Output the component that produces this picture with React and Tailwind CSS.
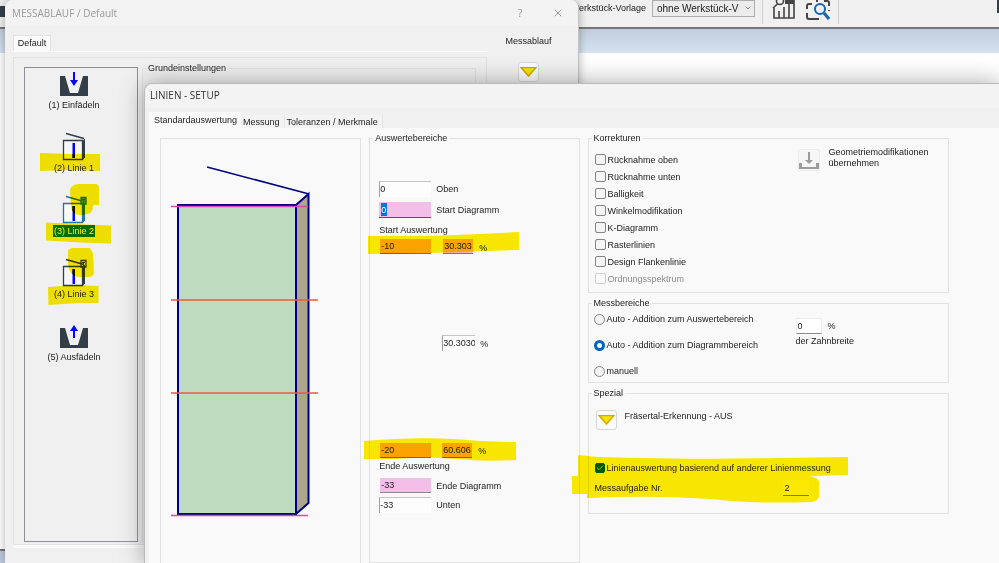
import { useState } from "react"
import { Check, ChevronDown, X } from "lucide-react"

const steps = [
  { id: 1, label: "(1) Einfädeln", icon: "in" },
  { id: 2, label: "(2) Linie 1", icon: "line" },
  { id: 3, label: "(3) Linie 2", icon: "calc" },
  { id: 4, label: "(4) Linie 3", icon: "calc" },
  { id: 5, label: "(5) Ausfädeln", icon: "out" },
]

const corrections = [
  { label: "Rücknahme oben" },
  { label: "Rücknahme unten" },
  { label: "Balligkeit" },
  { label: "Winkelmodifikation" },
  { label: "K-Diagramm" },
  { label: "Rasterlinien" },
  { label: "Design Flankenlinie" },
  { label: "Ordnungsspektrum", disabled: true },
]

const ranges = ["Auto - Addition zum Auswertebereich", "Auto - Addition zum Diagrammbereich", "manuell"]

const tabs = ["Standardauswertung", "Messung", "Toleranzen / Merkmale"]

const StepIcon = ({ type, active }) => {
  if (type === "in" || type === "out") {
    return (
      <svg width="40" height="28" viewBox="0 0 40 28">
        <path d="M6 5h5l5 17h8l5-17h5v20H6z" fill="#333f48" />
        {type === "in" ? (
          <path d="M19 1h2v8h3l-4 6-4-6h3z" fill="#0505f5" />
        ) : (
          <path d="M19 15h2V8h3l-4-6-4 6h3z" fill="#0505f5" />
        )}
      </svg>
    )
  }
  const color = active ? "#2472ad" : "#333f48"
  return (
    <svg width="40" height="28" viewBox="0 0 40 28" className="overflow-visible">
      <path d="M12 -0.500l18 5" stroke={color} strokeWidth="1.5" />
      <path d="M9.500 6.500h19v19h-19z" fill="#f8f8f8" stroke={color} strokeWidth="1.3" />
      <path d="M28.500 7l2.500-2.500v19l-2.500 2.500z" fill={color} />
      <path d="M18.500 9h2.500v15h-2.500z" fill="#0505f5" />
      <path d={type === "line" ? "M18.500 20h2.500v4h-2.500z" : "M18.500 9h2.500v5h-2.500z"} fill="#10104a" />
      {type === "calc" && (
        <g>
          <path d="M27 0.500h5v6.500h-5z" fill={active ? "#4b97a8" : "none"} stroke={color} strokeWidth="1.300" />
          <path d="M28 2.500h3M29.500 3v4" stroke={color} />
        </g>
      )}
    </svg>
  )
}

const ArrowButton = ({ label }) => (
  <button
    type="button"
    aria-label={label}
    className="flex h-5 w-[21px] items-center justify-center rounded-[3px] border border-[#d6d6d6] bg-[#fcfcfc]"
  >
    <svg width="17" height="10" viewBox="0 0 17 10">
      <path d="M1 0.500h15L8.500 9z" fill="#f8e400" stroke="#d3a800" strokeWidth="1.500" />
    </svg>
  </button>
)

const Group = ({ title, className = "", children }) => (
  <fieldset className="min-w-0 border border-[#e2e2e2]">
    <legend className="ml-[3px] px-0.5">{title}</legend>
    <div className={className}>{children}</div>
  </fieldset>
)

const ValueInput = ({ className = "", ...props }) => (
  <input
    type="text"
    className={`h-4 rounded-none border-l border-t border-[#c4c4c4] border-l-[#a0a0a0] bg-[#fdfdfd] pb-0.5 outline-none ${className}`}
    {...props}
  />
)

const ColorInput = ({ className = "", ...props }) => (
  <input type="text" className={`h-[15px] rounded-none border-b px-px outline-none ${className}`} {...props} />
)

const Toolbar = () => (
  <div>
    <div className="flex h-[29px] items-start border-b-2 border-[#77757a] bg-[#f0f0f0]">
      <div className="mt-1.5 h-[11px] w-1.5 shrink-0 bg-[#333f48]" />
      <label htmlFor="template" className="w-[640px] shrink-0 pt-0.5 text-right">
        Werkstück-Vorlage
      </label>
      <div className="relative ml-1.5 h-[17px] w-[103px] shrink-0">
        <select
          id="template"
          className="h-full w-full appearance-none border border-[#adadad] bg-[#ececec] pl-1 text-[10px] leading-3"
        >
          <option>ohne Werkstück-V</option>
        </select>
        <ChevronDown size={8} className="pointer-events-none absolute right-[3px] top-1 text-[#444]" />
      </div>
      <div className="ml-[7px] flex h-6 flex-1 items-start border-l border-[#cfcfcf] pl-[9px]">
        <button type="button" aria-label="Statistik" className="h-5 w-6">
          <svg width="24" height="20" viewBox="0 0 24 20" fill="none" stroke="#444" strokeWidth="1.600">
            <path d="M2 8v10h20V0M7 11v7M12 7v11M17 4v14" />
            <path d="M13 0h9v4h-9z" fill="#444" stroke="none" />
            <circle cx="8" cy="1" r="3.500" />
            <path d="M5.500 4L1 8" />
          </svg>
        </button>
        <button type="button" aria-label="Suche" className="ml-2.5 h-5 w-6">
          <svg width="24" height="20" viewBox="0 0 24 20" fill="none" stroke="#444" strokeWidth="2">
            <path d="M6 4H3q-2 0-2 2v3M1 13v4q0 2 2 2h8M11 19h2M18 1h3q2 0 2 2v3M23 10v1M10 1h2" />
            <circle cx="14" cy="9" r="5" stroke="#1763ad" />
            <path d="M18 13l5 6" stroke="#1763ad" strokeWidth="3" />
          </svg>
        </button>
        <div className="ml-2 h-6 w-px bg-[#cfcfcf]" />
        <div className="ml-auto h-[13px] w-0.5 bg-[#333f48]" />
      </div>
    </div>
    <div className="h-6 bg-linear-to-b from-[#c1cddc] to-[#d5e3f1]" />
  </div>
)

const SequenceWindow = () => {
  const [active, setActive] = useState(3)

  return (
    <section className="absolute bottom-0 left-[5px] top-0 flex w-[574px] flex-col rounded-t-lg border-r border-[#c4c4c4] bg-[#f0f0f0] shadow-[0_0_10px_rgba(0,0,0,0.3)]">
      <header className="flex h-[26px] shrink-0 items-center rounded-t-lg bg-[#f3f3f3] pl-[7px] pr-3 text-[#999]">
        <h1 className="flex-1 font-['Open_Sans','Noto_Sans',sans-serif] text-[10px]">MESSABLAUF / Default</h1>
        <button type="button" aria-label="Hilfe" className="w-4 font-['Open_Sans',sans-serif] text-[11px]">
          ?
        </button>
        <button type="button" aria-label="Schließen" className="ml-[22px] flex w-4 justify-center">
          <X size={12} strokeWidth={2} />
        </button>
      </header>
      <div className="flex flex-1 pl-2 pt-[9px]">
        <div className="flex w-[474px] flex-col pb-[15px]">
          <button type="button" className="h-4 w-[38px] border border-b-0 border-[#e2e2e2] bg-[#fafafa] leading-[11px]">
            Default
          </button>
          <div className="flex-1 border-b-[3px] border-t border-[#fafafa] pt-[5px]">
            <div className="flex h-full gap-1 border border-[#e2e2e2] pb-0.5 pl-2.5 pr-2.5">
              <nav className="mt-[9px] flex w-[114px] shrink-0 flex-col gap-[23px] border border-[#8d9099] pr-[14px] pt-[3px]">
                {steps.map((step) => (
                  <button
                    key={step.id}
                    type="button"
                    onClick={() => setActive(step.id)}
                    className="flex h-10 shrink-0 flex-col items-center"
                  >
                    <StepIcon type={step.icon} active={active === step.id} />
                    <span className={active === step.id ? "bg-[#0078d4] px-px text-white" : "px-px"}>
                      {step.label}
                    </span>
                  </button>
                ))}
              </nav>
              <div className="flex flex-1 flex-col pt-1 *:flex-1">
                <Group title="Grundeinstellungen" />
              </div>
            </div>
          </div>
        </div>
        <div className="flex flex-1 flex-col items-center pr-2">
          <span>Messablauf</span>
          <div className="mt-[15px]">
            <ArrowButton label="Messablauf" />
          </div>
        </div>
      </div>
    </section>
  )
}

// Tooth flank with evaluation limits
const FlankDrawing = () => (
  <svg width="200" height="400" viewBox="161 139 200 400">
    <path d="M178 205h118v309H178z" fill="#bfdcc1" />
    <path d="M296 205l13-11v309l-13 11z" fill="#aca68e" />
    <g fill="none" stroke="#00007f" strokeWidth="2">
      <path d="M207 167l102 27" strokeWidth="1.600" />
      <path d="M178 205h118v309H178zM296 205l12.500-11v309l-12.500 11" />
    </g>
    <path d="M171 206.500h137M171 515.500h137" stroke="#d848bc" strokeWidth="1.500" />
    <path d="M171 300h147M171 393h147" stroke="#f0583c" strokeWidth="1.600" />
  </svg>
)

const EvaluationRanges = () => (
  <Group title="Auswertebereiche" className="pl-[9px]">
    <div className="flex items-center pt-[37px]">
      <ValueInput id="top" defaultValue="0" className="w-[52px]" />
      <label htmlFor="top" className="ml-[5px]">Oben</label>
    </div>
    <div className="mt-[5px] flex items-center">
      <div className="flex h-4 w-[52px] border-b border-[#0067c0] bg-[#f2bfe9] pb-px pl-0.5 pt-px">
        <input
          id="startDiagram"
          type="text"
          defaultValue="0"
          className="w-[6px] bg-[#0078d4] text-white outline-none"
        />
      </div>
      <label htmlFor="startDiagram" className="ml-[5px]">Start Diagramm</label>
    </div>
    <label htmlFor="startEval" className="mt-1.5 block">Start Auswertung</label>
    <div className="mt-[3px] flex items-center">
      <ColorInput id="startEval" defaultValue="-10" className="ml-px w-[51px] border-[#777] bg-[#ffb0c0]" />
      <ColorInput
        aria-label="Start Auswertung Prozent"
        defaultValue="30.3030"
        className="ml-3 w-[30px] border-[#777] bg-[#ffb0c0]"
      />
      <span className="ml-1.5 pt-0.5">%</span>
    </div>
    <div className="mt-[81px] flex items-center pl-[63px]">
      <ValueInput aria-label="Auswertung Prozent" defaultValue="30.3030" className="w-[33px]" />
      <span className="ml-[5px] pt-0.5">%</span>
    </div>
    <div className="mt-[92px] flex items-center">
      <ColorInput id="endEval" defaultValue="-20" className="ml-px w-[51px] border-[#777] bg-[#ffb0c0]" />
      <ColorInput
        aria-label="Ende Auswertung Prozent"
        defaultValue="60.6060"
        className="ml-[11px] w-[30px] border-[#777] bg-[#ffb0c0]"
      />
      <span className="ml-1.5">%</span>
    </div>
    <label htmlFor="endEval" className="mt-0.5 block">Ende Auswertung</label>
    <div className="mt-[6px] flex items-center">
      <ColorInput id="endDiagram" defaultValue="-33" className="ml-px w-[51px] border-[#8a8a8a] bg-[#f2bfe9]" />
      <label htmlFor="endDiagram" className="ml-[5px]">Ende Diagramm</label>
    </div>
    <div className="mt-1 flex items-center">
      <ValueInput id="bottom" defaultValue="-33" className="w-[52px]" />
      <label htmlFor="bottom" className="ml-[5px]">Unten</label>
    </div>
  </Group>
)

const Corrections = () => (
  <Group title="Korrekturen" className="flex pb-[5px] pl-1.5 pt-[7px]">
    <div className="w-[203px]">
      {corrections.map(({ label, disabled }) => (
        <label key={label} className={`flex h-[17px] items-center gap-0.5 ${disabled ? "text-[#8b8b8b]" : ""}`}>
          <input
            type="checkbox"
            disabled={disabled}
            className="size-[11px] appearance-none rounded-[2px] border border-[#858585] bg-[#f4f4f4] disabled:border-[#cfcfcf] disabled:bg-[#fafafa]"
          />
          {label}
        </label>
      ))}
    </div>
    <button type="button" className="-mt-1 flex h-6 items-start gap-[9px] text-left leading-[11px]">
      <span className="mt-0.5 flex size-[22px] items-end justify-center rounded-[2px] border border-[#ececec] bg-[#f6f6f6]">
        <svg width="20" height="19" viewBox="0 0 20 19">
          <path d="M0 12h3v4h14v-4h3v6H0z" fill="#9c9c9c" />
          <path d="M9 1h2v8h3l-4 4-4-4h3z" fill="#9c9c9c" />
        </svg>
      </span>
      <span>
        Geometriemodifikationen
        <br />
        übernehmen
      </span>
    </button>
  </Group>
)

const MeasuringRanges = () => (
  <Group title="Messbereiche" className="flex pb-[5px] pl-[5px] pt-1">
    <div className="flex w-[202px] flex-col gap-[14px]">
      {ranges.map((label, i) => (
        <label key={label} className="flex h-3 items-center gap-0.5">
          <input
            type="radio"
            name="range"
            defaultChecked={i === 1}
            className="size-[11px] appearance-none rounded-full border border-[#858585] bg-[#f4f4f4] checked:border-[3px] checked:border-[#0064bd] checked:bg-white"
          />
          {label}
        </label>
      ))}
    </div>
    <div className="pt-[5px]">
      <div className="flex items-center">
        <input
          id="toothWidth"
          type="text"
          defaultValue="0"
          className="h-4 w-[26px] border border-[#ececec] border-b-[#8a8a8a] bg-white pl-px outline-none"
        />
        <span className="ml-1.5">%</span>
      </div>
      <label htmlFor="toothWidth" className="mt-px block">der Zahnbreite</label>
    </div>
  </Group>
)

const Special = () => (
  <Group title="Spezial" className="pb-[17px] pl-1.5 pt-[11px]">
    <div className="flex items-start gap-2 pl-px">
      <ArrowButton label="Fräsertal-Erkennung" />
      <span>Fräsertal-Erkennung - AUS</span>
    </div>
    <label className="mt-8 flex items-center gap-0.5">
      <span className="relative size-[10px]">
        <input
          type="checkbox"
          defaultChecked
          className="peer block size-[10px] appearance-none rounded-[2px] border border-[#858585] checked:border-[#005fb8] checked:bg-[#005fb8]"
        />
        <Check
          size={8}
          strokeWidth={2}
          className="pointer-events-none invisible absolute left-px top-px text-white peer-checked:visible"
        />
      </span>
      Linienauswertung basierend auf anderer Linienmessung
    </label>
    <div className="mt-1.5 flex items-center">
      <label htmlFor="taskNo" className="w-[188px]">Messaufgabe Nr.</label>
      <input
        id="taskNo"
        type="text"
        defaultValue="2"
        className="h-4 w-[26px] border-b border-[#8a8a8a] bg-[#fdfdfd] pl-0.5 outline-none"
      />
    </div>
  </Group>
)

const SetupWindow = () => {
  const [tab, setTab] = useState(tabs[0])

  return (
    <section className="absolute bottom-0 left-36 right-0 top-[83px] flex flex-col rounded-tl-lg border-l border-t border-[#b9b9b9] bg-[#f0f0f0] shadow-[0_0_24px_rgba(0,0,0,0.35)]">
      <header className="h-6 shrink-0 rounded-tl-lg bg-[#f3f3f3] pl-[5px]">
        <h2 className="font-['Open_Sans','Noto_Sans',sans-serif] text-[10px] leading-[23px] text-[#333]">
          LINIEN - SETUP
        </h2>
      </header>
      <div className="mt-1 flex items-end pl-1">
        {tabs.map((name) => (
          <button
            key={name}
            type="button"
            onClick={() => setTab(name)}
            className={
              name === tab
                ? "h-4 bg-[#f9f9f9] pb-px pl-[5px] pr-1"
                : "h-[13px] border-r border-[#e4e4e4] bg-[#f3f3f3] pl-0.5 pr-1"
            }
          >
            {name}
          </button>
        ))}
      </div>
      <div className="ml-1 grid flex-1 grid-cols-[201fr_210fr_361fr] gap-2 bg-[#f9f9f9] pl-[11px] pr-[50px] pt-1">
        <div className="mt-1.5 overflow-hidden border border-b-0 border-[#e2e2e2]">
          <FlankDrawing />
        </div>
        <EvaluationRanges />
        <div className="flex flex-col gap-1">
          <Corrections />
          <MeasuringRanges />
          <Special />
        </div>
      </div>
    </section>
  )
}

// Marker strokes laid over both windows
const Highlights = () => (
  <svg className="pointer-events-none absolute inset-0 h-full w-full mix-blend-multiply" fill="#fdec00">
    <path d="M40 153l30 1h30v17l-30-1-30 1z" />
    <path d="M70 190q1-5 8-6l17-0q4 0 4 4v17h-6q0 8-5 9-8 2-13 0-4-2-4-10z" />
    <path d="M46 222.500l40 2 25 1v18l-30-1-35-2z" />
    <path d="M68 250l4-2h18l3 5 1 20q-1 4-5 4H78q-9-2-10-12z" />
    <path d="M48 287l30-2 20.500 1v17l-20 0-30 2z" />
    <path d="M368 236h62l50-2 39-2v18l-60 2-60 2h-31z" />
    <path d="M364 441q50-4 90-2 30 3 62 3v18q-30 2-60-1-30-3-60 0l-32 0z" />
    <path d="M578 455l20 2q100 3 180 1l70-1v18l-38 1q9 2 9 6v15q-1 4-8 5-60 2-100-3-60-4-124-1v-4h-15v-18h6z" />
  </svg>
)

const App = () => (
  <main className="relative flex h-screen flex-col overflow-hidden bg-white font-['Liberation_Sans',Arial,sans-serif] text-[9px] leading-3 text-[#222]">
    <Toolbar />
    <div className="flex-1" />
    <footer className="h-[14px] border-t-2 border-[#77757a] bg-[#bccadd]" />
    <SequenceWindow />
    <SetupWindow />
    <Highlights />
  </main>
)

export default App
